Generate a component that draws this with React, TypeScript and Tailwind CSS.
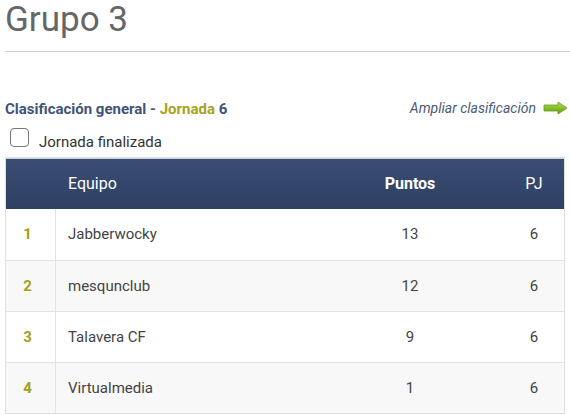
import React from "react";

const rows = [
  { pos: 1, team: "Jabberwocky", pts: 13, pj: 6 },
  { pos: 2, team: "mesqunclub", pts: 12, pj: 6 },
  { pos: 3, team: "Talavera CF", pts: 9, pj: 6 },
  { pos: 4, team: "Virtualmedia", pts: 1, pj: 6 },
];

export default function App() {
  return (
    <div className="w-[570px] h-[415px] overflow-hidden bg-white pl-[5px] font-['Roboto',sans-serif]">
      <h1 className="text-[35px] leading-[40px] text-[#666] pt-[0px] font-normal">Grupo 3</h1>
      <div className="mt-[11px] h-px bg-[#cfcfcf]" />
      <div className="mt-[46px] h-[20px] flex items-center justify-between pr-[2px]">
        <div className="text-[15px] font-bold text-[#3f5479] mt-[2px]">
          Clasificación general - <span className="text-[#a6a321]">Jornada</span> 6
        </div>
        <div className="flex items-center gap-[7px]">
          <span className="italic text-[14px] text-[#4b5a78]">Ampliar clasificación</span>
          <svg width="25" height="14" viewBox="0 0 25 14">
            <defs>
              <linearGradient id="g" x1="0" y1="0" x2="0" y2="1">
                <stop offset="0" stopColor="#b6e04a" />
                <stop offset="1" stopColor="#5e9a12" />
              </linearGradient>
            </defs>
            <path d="M1 4 H15 V1 L24 7 L15 13 V10 H1 Z" fill="url(#g)" stroke="#6b9c1c" strokeWidth="0.8" />
          </svg>
        </div>
      </div>
      <div className="mt-[9px] flex items-start ml-[5px] h-[24px]">
        <div className="mt-[1px] w-[19px] h-[19px] rounded-[4px] border-[1.5px] border-[#777] bg-white" />
        <span className="ml-[10px] mt-[5px] text-[15px] leading-[20px] text-[#333]">Jornada finalizada</span>
      </div>
      <div className="mt-[6px] w-[560px] border border-[#e0e0e0]">
        <div className="flex h-[51px] items-center bg-gradient-to-b from-[#3a4d72] to-[#2e4064] border-t border-[#c8d0dc] text-white text-[16px]">
          <div className="w-[50px]" />
          <div className="flex-1 pl-[12px]">Equipo</div>
          <div className="w-[120px] text-center font-bold">Puntos</div>
          <div className="w-[34px]" />
          <div className="w-[60px] text-center">PJ</div>
        </div>
        {rows.map((r, i) => (
          <div
            key={r.pos}
            className={`flex h-[51px] items-center text-[15px] ${i > 0 ? "border-t border-[#e3e3e3]" : ""} ${i % 2 === 1 ? "bg-[#f8f8f8]" : "bg-white"}`}
          >
            <div className="w-[50px] h-full flex items-center justify-center border-r border-[#e3e3e3] font-bold text-[#a3a020] pr-[6px]">
              {r.pos}
            </div>
            <div className="flex-1 pl-[12px] text-[#444]">{r.team}</div>
            <div className="w-[120px] text-center text-[#444]">{r.pts}</div>
            <div className="w-[34px]" />
            <div className="w-[60px] text-center text-[#444]">{r.pj}</div>
          </div>
        ))}
      </div>
    </div>
  );
}
